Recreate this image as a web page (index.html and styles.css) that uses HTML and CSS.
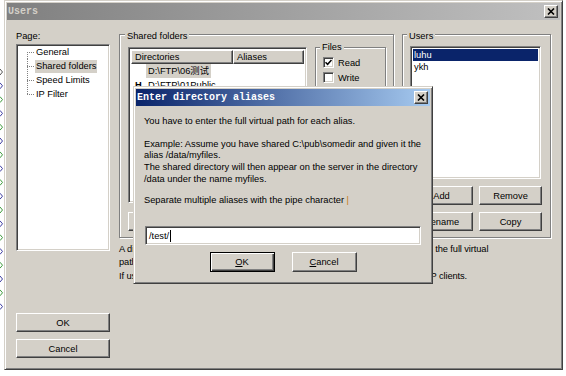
FILE: index.html
```html
<!DOCTYPE html>
<html>
<head>
<meta charset="utf-8">
<title>Users</title>
<link rel="stylesheet" href="styles.css">
</head>
<body>
<div class="desk">
	<svg class="desk-marks" viewBox="0 0 4 376" fill="none" stroke-width="1">
		<path d="M0,69 L2.5,72 L0,75" stroke="#555"/>
		<path d="M0,82.8 L2.5,85.8 L0,88.8" stroke="#3c3ca0"/>
		<path d="M0,96.6 L2.5,99.6 L0,102.6" stroke="#3c9a3c"/>
		<path d="M0,110.4 L2.5,113.4 L0,116.4" stroke="#3c3ca0"/>
		<path d="M0,124.2 L2.5,127.2 L0,130.2" stroke="#3c9a3c"/>
		<path d="M0,138 L2.5,141 L0,144" stroke="#3c3ca0"/>
		<path d="M0,151.8 L2.5,154.8 L0,157.8" stroke="#3c9a3c"/>
		<path d="M0,165.6 L2.5,168.6 L0,171.6" stroke="#3c3ca0"/>
		<path d="M0,179.4 L2.5,182.4 L0,185.4" stroke="#3c9a3c"/>
		<path d="M0,193.2 L2.5,196.2 L0,199.2" stroke="#3c3ca0"/>
		<path d="M0,207 L2.5,210 L0,213" stroke="#3c9a3c"/>
		<path d="M0,220.8 L2.5,223.8 L0,226.8" stroke="#3c3ca0"/>
		<path d="M0,234.6 L2.5,237.6 L0,240.6" stroke="#3c9a3c"/>
		<path d="M0,248.4 L2.5,251.4 L0,254.4" stroke="#3c3ca0"/>
		<path d="M0,262.2 L2.5,265.2 L0,268.2" stroke="#3c9a3c"/>
		<path d="M0,276 L2.5,279 L0,282" stroke="#3c3ca0"/>
		<path d="M0,289.8 L2.5,292.8 L0,295.8" stroke="#3c9a3c"/>
		<path d="M0,303.6 L2.5,306.6 L0,309.6" stroke="#3c3ca0"/>
	</svg>

	<div class="window">
		<div class="caption">
			<span class="caption-text">Users</span>
			<span class="caption-btn">
				<svg width="8" height="7" viewBox="0 0 8 7"><path d="M1,0.5 L7,6.5 M7,0.5 L1,6.5" stroke="#000" stroke-width="1.6"/></svg>
			</span>
		</div>

		<div class="client">
			<div class="left-col">
				<div class="page-label">Page:</div>
				<div class="tree sunken">
					<ul>
						<li><span>General</span></li>
						<li class="sel"><span>Shared folders</span></li>
						<li><span>Speed Limits</span></li>
						<li><span>IP Filter</span></li>
					</ul>
				</div>
				<div class="main-buttons">
					<button class="btn">OK</button>
					<button class="btn">Cancel</button>
				</div>
			</div>

			<div class="right-col">
				<div class="groups">
					<fieldset class="group shared">
						<legend>Shared folders</legend>
						<div class="shared-body">
							<div class="dir-side">
								<div class="listview sunken">
									<div class="lv-head">
										<span class="col-dir">Directories</span>
										<span class="col-alias">Aliases</span>
									</div>
									<div class="lv-row"><span class="flag"></span><span class="path sel-gray">D:\FTP\06测试</span></div>
									<div class="lv-row"><span class="flag">H</span><span class="path">D:\FTP\01Public</span></div>
								</div>
								<div class="dir-buttons">
									<button class="btn"></button>
								</div>
							</div>
							<div class="perm-side">
								<fieldset class="group small">
									<legend>Files</legend>
									<div class="check"><span class="box on"><svg width="7" height="7" viewBox="0 0 7 7"><path d="M0.5,3.2 L2.6,5.3 L6.5,1" stroke="#000" stroke-width="1.5" fill="none"/></svg></span>Read</div>
									<div class="check"><span class="box"></span>Write</div>
									<div class="check"><span class="box"></span></div>
								</fieldset>
							</div>
						</div>
					</fieldset>

					<fieldset class="group users">
						<legend>Users</legend>
						<div class="userlist sunken">
							<div class="user sel">luhu</div>
							<div class="user">ykh</div>
						</div>
						<div class="user-buttons">
							<button class="btn">Add</button>
							<button class="btn">Remove</button>
							<button class="btn">Rename</button>
							<button class="btn">Copy</button>
						</div>
					</fieldset>
				</div>

				<p class="hint">A directory alias will also appear at the specified location. Aliases must contain the full virtual<br>path.</p>
				<p class="hint">If using aliases, please avoid cyclic directory structures, it will only confuse FTP clients.</p>
			</div>
		</div>
	</div>
</div>

<div class="dialog">
	<div class="caption">
		<span class="caption-text">Enter directory aliases</span>
		<span class="caption-btn">
			<svg width="8" height="7" viewBox="0 0 8 7"><path d="M1,0.5 L7,6.5 M7,0.5 L1,6.5" stroke="#000" stroke-width="1.6"/></svg>
		</span>
	</div>
	<div class="dialog-body">
		<p>You have to enter the full virtual path for each alias.</p>
		<p>Example: Assume you have shared C:\pub\somedir and given it the<br>alias /data/myfiles.<br>The shared directory will then appear on the server in the directory<br>/data under the name myfiles.</p>
		<p class="sep">Separate multiple aliases with the pipe character <span class="pipe">|</span></p>
		<div class="edit sunken">/test/<span class="caret"></span></div>
		<div class="dialog-buttons">
			<button class="btn default"><u>O</u>K</button>
			<button class="btn"><u>C</u>ancel</button>
		</div>
	</div>
</div>
</body>
</html>
```

FILE: styles.css
```css
* {
	box-sizing: border-box;
}

body {
	margin: 0;
	width: 566px;
	height: 376px;
	overflow: hidden;
	position: relative;
	background: #fff;
	color: #000;
	font-family: "Liberation Sans", Arial, "Noto Sans CJK SC", sans-serif;
	font-size: 9.3px;
}

.desk {
	display: flex;
	height: 376px;
}

.desk-marks {
	width: 4px;
	height: 376px;
	flex: none;
}

/* 3d frames */
.window,
.dialog {
	background: #d4d0c8;
	border: 1px solid;
	border-color: #d4d0c8 #404040 #404040 #d4d0c8;
	box-shadow: inset 1px 1px #fff, inset -1px -1px #808080;
	padding: 2px;
}

.sunken {
	background: #fff;
	border: 1px solid;
	border-color: #808080 #fff #fff #808080;
	box-shadow: inset 1px 1px #404040, inset -1px -1px #d4d0c8;
}

.btn,
.caption-btn {
	background: #d4d0c8;
	border: 1px solid;
	border-color: #fff #404040 #404040 #fff;
	box-shadow: inset -1px -1px #808080;
}

.btn {
	font: inherit;
	color: #000;
	padding: 0;
	height: 19px;
}

.btn.default {
	border-color: #000;
	box-shadow: inset 1px 1px #fff, inset -1px -1px #404040, inset -2px -2px #808080;
}

.window {
	width: 559px;
	height: 370px;
	display: flex;
	flex-direction: column;
}

.caption {
	height: 17px;
	flex: none;
	display: flex;
	align-items: center;
	justify-content: space-between;
	padding: 0 2px 0 1px;
	background: linear-gradient(to right, #808080, #c0c0c0);
}

.caption-text {
	font: bold 10px "Liberation Mono", monospace;
	color: #d4d0c8;
}

.caption-btn {
	width: 14px;
	height: 13px;
	display: flex;
	align-items: center;
	justify-content: center;
}

.client {
	flex: 1;
	display: flex;
	padding: 10px 9px 9px;
}

/* left column */
.left-col {
	width: 94px;
	flex: none;
	display: flex;
	flex-direction: column;
}

.page-label {
	line-height: 12px;
}

.tree {
	height: 207px;
	margin-top: 2px;
}

.tree ul {
	list-style: none;
	margin: 0;
	padding: 0 0 0 10px;
}

.tree li {
	display: flex;
	align-items: center;
	height: 14px;
}

.tree li::before {
	content: "";
	flex: none;
	width: 8px;
	height: 14px;
	background:
		repeating-linear-gradient(to right, #808080 0 1px, transparent 1px 2px) 0 7px / 8px 1px no-repeat,
		repeating-linear-gradient(#808080 0 1px, transparent 1px 2px) 0 0 / 1px 14px no-repeat;
}

.tree li:first-child::before {
	background-position: 0 7px, 0 7px;
	background-size: 8px 1px, 1px 7px;
}

.tree li:last-child::before {
	background-size: 8px 1px, 1px 8px;
}

.tree li span {
	padding: 0 1px;
	line-height: 13px;
}

.tree li.sel span {
	background: #d4d0c8;
}

.main-buttons {
	margin-top: auto;
	display: flex;
	flex-direction: column;
	gap: 7px;
}

/* right column */
.right-col {
	flex: 1;
	min-width: 0;
	margin: -4px 0 0 9px;
	display: flex;
	flex-direction: column;
}

.groups {
	display: flex;
	gap: 8px;
}

.group {
	margin: 0;
	min-width: 0;
	border: 1px solid #808080;
	box-shadow: inset 1px 1px #fff, 1px 1px #fff;
}

.group legend {
	margin-left: -3px;
	padding: 4px 2px 0;
	line-height: 12px;
	background: #d4d0c8;
}

.group.small legend {
	padding-top: 0;
}

.shared {
	width: 275px;
	flex: none;
	padding: 0 8px 5px;
}

.shared-body {
	display: flex;
	align-items: flex-start;
}

.dir-side {
	width: 179px;
	flex: none;
	margin-top: 5px;
}

.listview {
	height: 156px;
	padding: 2px;
}

.lv-head {
	display: flex;
	height: 14px;
}

.lv-head span {
	line-height: 12px;
	padding-left: 3px;
	border: 1px solid;
	border-color: #fff #404040 #404040 #fff;
	box-shadow: inset -1px -1px #808080;
	background: #d4d0c8;
}

.col-dir {
	width: 102px;
}

.col-alias {
	flex: 1;
}

.lv-row {
	display: flex;
	align-items: center;
	height: 14px;
}

.flag {
	width: 15px;
	padding-left: 4px;
	font-weight: bold;
}

.path {
	padding: 0 2px;
	line-height: 14px;
}

.sel-gray {
	background: #d4d0c8;
}

.dir-buttons {
	display: flex;
	margin-top: 9px;
}

.dir-buttons .btn {
	width: 55px;
}

.perm-side {
	width: 71px;
	flex: none;
	margin: -1px 0 0 8px;
}

.group.small {
	padding: 0 4px 20px 7px;
}

.check {
	display: flex;
	align-items: center;
	height: 15px;
	gap: 4px;
}

.check:first-of-type {
	margin-top: 2px;
}

.box {
	width: 11px;
	height: 11px;
	flex: none;
	display: flex;
	align-items: center;
	justify-content: center;
	background: #fff;
	border: 1px solid;
	border-color: #808080 #fff #fff #808080;
	box-shadow: inset 1px 1px #404040, inset -1px -1px #d4d0c8;
}

.users {
	flex: 1;
	padding: 0 9px 6px 7px;
}

.userlist {
	height: 133px;
	margin-top: 4px;
	padding: 2px;
}

.user {
	height: 12px;
	line-height: 12px;
	padding-left: 1px;
}

.user.sel {
	background: #0a246a;
	color: #fff;
}

.user-buttons {
	display: grid;
	grid-template-columns: 63px 63px;
	column-gap: 6px;
	row-gap: 7px;
	margin-top: 7px;
}

.hint {
	margin: 5px 0 0;
	line-height: 13px;
	letter-spacing: -0.1px;
	white-space: nowrap;
}

.hint + .hint {
	margin-top: 1px;
}

/* dialog box */
.dialog {
	position: absolute;
	left: 133px;
	top: 86px;
	width: 300px;
	height: 198px;
}

.dialog .caption {
	background: linear-gradient(to right, #0a246a, #a6caf0);
}

.dialog .caption-text {
	color: #fff;
}

.dialog-body {
	padding: 10px 8px 0;
}

.dialog-body p {
	margin: 0;
	line-height: 11.7px;
}

.dialog-body p + p {
	margin-top: 11px;
}

.dialog-body p.sep {
	margin-top: 9px;
}

.pipe {
	color: #c87818;
}

.edit {
	width: 276px;
	height: 19px;
	margin: 20px 0 0 1px;
	padding-left: 3px;
	display: flex;
	align-items: center;
}

.caret {
	display: inline-block;
	width: 1px;
	height: 12px;
	margin-left: 1px;
	background: #000;
}

.dialog-buttons {
	display: flex;
	justify-content: center;
	gap: 17px;
	margin-top: 7px;
}

.dialog-buttons .btn {
	width: 65px;
	height: 20px;
}
```
